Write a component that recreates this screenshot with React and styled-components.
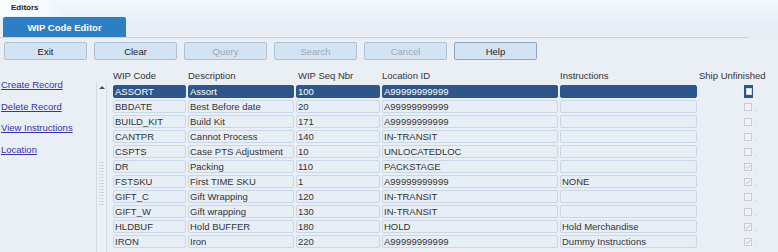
import React from "react";
import styled, { createGlobalStyle } from "styled-components";

const Global = createGlobalStyle`
  html, body { margin: 0; padding: 0; background: #eaeef5; }
  body { font-family: "Liberation Sans", Arial, sans-serif; }
`;

const Page = styled.div`
  width: 778px;
  height: 252px;
  overflow: hidden;
  background: linear-gradient(to bottom, #f3f8fe 0px, #e6eef9 26px, #eaeef5 40px, #eaeef5 100%);
  color: #333;
  font-size: 9.5px;
`;

const TopStrip = styled.div`
  height: 16px;
  display: flex;
`;

const EditorsTab = styled.div`
  height: 16px;
  line-height: 15px;
  padding: 0 26px 0 11px;
  font-weight: bold;
  font-size: 8px;
  color: #222;
  background: linear-gradient(to right, #fbfdff 0%, #f6f9fe 70%, rgba(246, 249, 254, 0) 100%);
  clip-path: polygon(0 0, 78% 0, 100% 100%, 0 100%);
`;

const TabRow = styled.div`
  width: 748px;
  height: 22px;
  padding-left: 3px;
  box-sizing: border-box;
  border-bottom: 1px solid #c8d3e1;
  display: flex;
  align-items: flex-end;
`;

const ActiveTab = styled.div`
  width: 123px;
  height: 20px;
  background: #2d7ec5;
  color: #fff;
  font-weight: bold;
  font-size: 9.5px;
  display: flex;
  align-items: center;
  justify-content: center;
  border-radius: 2px 2px 0 0;
`;

const Toolbar = styled.div`
  display: flex;
  gap: 7px;
  padding: 4px 0 0 4px;
`;

const Button = styled.div`
  width: 83px;
  height: 18px;
  box-sizing: border-box;
  background: #d4e3f4;
  border: 1px solid ${(p) => (p.$strong ? "#8ea4c0" : "#afc0d5")};
  border-radius: 2px;
  display: flex;
  align-items: center;
  justify-content: center;
  font-size: 9.5px;
  color: ${(p) => (p.$disabled ? "#a2a6ad" : "#222")};
`;

const Content = styled.div`
  display: flex;
  padding-top: 7px;
`;

const Sidebar = styled.div`
  width: 95px;
  padding-top: 12px;
  display: flex;
  flex-direction: column;
  gap: 9.5px;
`;

const Link = styled.a`
  display: block;
  height: 12px;
  line-height: 12px;
  padding-left: 1px;
  color: #3434ad;
  text-decoration: underline;
  font-size: 9.5px;
  white-space: nowrap;
  cursor: pointer;
`;

const ScrollTrack = styled.div`
  width: 11px;
  height: 180px;
  margin-top: 15px;
  margin-left: 1px;
  box-sizing: border-box;
  border-left: 1px solid #d3dbe6;
  border-right: 1px solid #d3dbe6;
  background: #edf1f7;
  display: flex;
  flex-direction: column;
  align-items: center;
`;

const ArrowUp = styled.div`
  margin-top: 4px;
  width: 0;
  height: 0;
  border-left: 3px solid transparent;
  border-right: 3px solid transparent;
  border-bottom: 3px solid #4a4f58;
`;

const Grip = styled.div`
  margin-top: 72px;
  width: 5px;
  height: 46px;
  background-image: radial-gradient(circle, #b9c0ca 0.7px, transparent 0.9px);
  background-size: 2.5px 3px;
`;

const Table = styled.div`
  margin-left: 6px;
  display: flex;
  flex-direction: column;
  gap: 2px;
`;

const cols = "73px 106px 84px 176px 137px 78px";

const HeaderRow = styled.div`
  display: grid;
  grid-template-columns: ${cols};
  column-gap: 2px;
  height: 16px;
  align-items: center;
`;

const HeadCell = styled.div`
  font-size: 9.5px;
  color: #333;
  white-space: nowrap;
  padding-left: ${(p) => (p.$pad ? p.$pad : 0)}px;
`;

const Row = styled.div`
  display: grid;
  grid-template-columns: ${cols};
  column-gap: 2px;
  height: 13px;
`;

const Cell = styled.div`
  box-sizing: border-box;
  height: 13px;
  line-height: 11px;
  padding-left: 1px;
  border: 1px solid ${(p) => (p.$sel ? "#2f568a" : "#c9d7ea")};
  border-radius: 2px;
  background: ${(p) => (p.$sel ? "#2f568a" : "#e8eef6")};
  color: ${(p) => (p.$sel ? "#fff" : "#333")};
  white-space: nowrap;
  overflow: hidden;
  font-size: 9.5px;
`;

const CheckCell = styled.div`
  display: flex;
  align-items: center;
  padding-left: 45px;
  height: 13px;
`;

const FocusBox = styled.div`
  width: 9px;
  height: 13px;
  box-sizing: border-box;
  background: #2f568a;
  display: flex;
  align-items: center;
  justify-content: center;
`;

const FocusInner = styled.div`
  width: 6px;
  height: 7px;
  background: #fff;
  border: 1px solid #cfd6e0;
  box-sizing: border-box;
`;

const Box = styled.div`
  position: relative;
  width: 8px;
  height: 8px;
  box-sizing: border-box;
  border: 1px solid #c9ced6;
  background: #eff2f7;
  display: flex;
  align-items: center;
  justify-content: center;
`;

const Dot = styled.span`
  position: absolute;
  left: 10px;
  bottom: -1px;
  width: 1px;
  height: 1px;
  background: #c5cad2;
`;

const Check = ({ checked, focused }) => {
  if (focused) {
    return (
      <FocusBox>
        <FocusInner />
      </FocusBox>
    );
  }
  return (
    <Box>
      {checked && (
        <svg width="6" height="6" viewBox="0 0 6 6">
          <path d="M0.8 3.1 L2.4 4.6 L5.3 1.2" fill="none" stroke="#b4bac3" strokeWidth="0.9" />
        </svg>
      )}
      <Dot />
    </Box>
  );
};

const rows = [
  ["ASSORT", "Assort", "100", "A99999999999", "", false],
  ["BBDATE", "Best Before date", "20", "A99999999999", "", false],
  ["BUILD_KIT", "Build Kit", "171", "A99999999999", "", false],
  ["CANTPR", "Cannot Process", "140", "IN-TRANSIT", "", false],
  ["CSPTS", "Case PTS Adjustment", "10", "UNLOCATEDLOC", "", false],
  ["DR", "Packing", "110", "PACKSTAGE", "", true],
  ["FSTSKU", "First TIME SKU", "1", "A99999999999", "NONE", true],
  ["GIFT_C", "Gift Wrapping", "120", "IN-TRANSIT", "", false],
  ["GIFT_W", "Gift wrapping", "130", "IN-TRANSIT", "", false],
  ["HLDBUF", "Hold BUFFER", "180", "HOLD", "Hold Merchandise", true],
  ["IRON", "Iron", "220", "A99999999999", "Dummy Instructions", true],
];

export default function App() {
  return (
    <Page>
      <Global />
      <TopStrip>
        <EditorsTab>Editors</EditorsTab>
      </TopStrip>
      <TabRow>
        <ActiveTab>WIP Code Editor</ActiveTab>
      </TabRow>
      <Toolbar>
        <Button>Exit</Button>
        <Button>Clear</Button>
        <Button $disabled>Query</Button>
        <Button $disabled>Search</Button>
        <Button $disabled>Cancel</Button>
        <Button $strong>Help</Button>
      </Toolbar>
      <Content>
        <Sidebar>
          <Link>Create Record</Link>
          <Link>Delete Record</Link>
          <Link>View Instructions</Link>
          <Link>Location</Link>
        </Sidebar>
        <ScrollTrack>
          <ArrowUp />
          <Grip />
        </ScrollTrack>
        <Table>
          <HeaderRow>
            <HeadCell>WIP Code</HeadCell>
            <HeadCell>Description</HeadCell>
            <HeadCell $pad={2}>WIP Seq Nbr</HeadCell>
            <HeadCell>Location ID</HeadCell>
            <HeadCell>Instructions</HeadCell>
            <HeadCell>Ship Unfinished</HeadCell>
          </HeaderRow>
          {rows.map((r, i) => {
            const sel = i === 0;
            return (
              <Row key={r[0]}>
                <Cell $sel={sel}>{r[0]}</Cell>
                <Cell $sel={sel}>{r[1]}</Cell>
                <Cell $sel={sel}>{r[2]}</Cell>
                <Cell $sel={sel}>{r[3]}</Cell>
                <Cell $sel={sel}>{r[4]}</Cell>
                <CheckCell>
                  <Check checked={r[5]} focused={sel} />
                </CheckCell>
              </Row>
            );
          })}
        </Table>
      </Content>
    </Page>
  );
}
